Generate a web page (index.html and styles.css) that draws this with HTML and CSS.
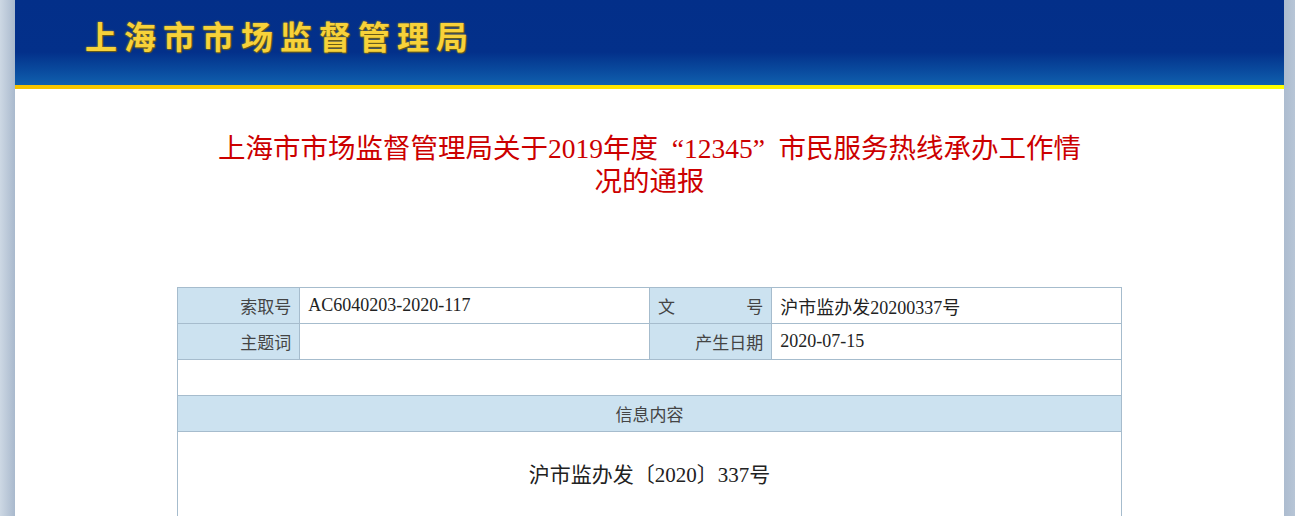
FILE: index.html
```html
<!DOCTYPE html>
<html lang="zh-CN">
<head>
<meta charset="utf-8">
<title>上海市市场监督管理局</title>
<link rel="stylesheet" href="styles.css">
</head>
<body>
<div class="page">
  <header class="banner">
    <div class="brand">上海市市场监督管理局</div>
  </header>
  <div class="stripe"></div>
  <main class="main">
    <h1 class="title">上海市市场监督管理局关于2019年度<span class="q open">“</span>12345<span class="q close">”</span>市民服务热线承办工作情况的通报</h1>
    <table class="meta">
      <colgroup>
        <col class="c-label"><col class="c-value"><col class="c-label"><col class="c-value">
      </colgroup>
      <tr>
        <th class="label">索取号</th>
        <td class="value">AC6040203-2020-117</td>
        <th class="label split"><span>文</span><span>号</span></th>
        <td class="value">沪市监办发20200337号</td>
      </tr>
      <tr>
        <th class="label">主题词</th>
        <td class="value"></td>
        <th class="label">产生日期</th>
        <td class="value">2020-07-15</td>
      </tr>
      <tr class="blank"><td colspan="4"></td></tr>
      <tr><th class="section" colspan="4">信息内容</th></tr>
      <tr>
        <td class="content" colspan="4"><p class="docno">沪市监办发〔2020〕337号</p></td>
      </tr>
    </table>
  </main>
</div>
</body>
</html>
```

FILE: styles.css
```css
html, body {
  margin: 0;
  padding: 0;
}
body {
  background: linear-gradient(to right, #cdd8e4 0px, #a9b9cd 15px, #a9b9cd 1280px, #b7c5d6 1295px);
  font-family: "Liberation Serif", "Noto Sans CJK SC", serif;
  height: 516px;
  overflow: hidden;
}
.page {
  margin-left: 15px;
  width: 1269px;
  background: #ffffff;
  min-height: 516px;
}
.banner {
  height: 85px;
  background: linear-gradient(to bottom, #032f89 0px, #03308a 52px, #0a4da0 72px, #1060ae 85px);
  display: flex;
  align-items: flex-start;
}
.brand {
  margin: 13px 0 0 70px;
  font-family: "Noto Sans CJK SC", sans-serif;
  font-weight: 700;
  font-size: 32px;
  line-height: 44px;
  letter-spacing: 7px;
  color: #f7d23a;
  text-shadow: 1px 1px 1px #6a5a10, 0 0 2px #c9a820;
}
.stripe {
  height: 4px;
  background: linear-gradient(to right, #f6c300, #ffe600 50%, #ffff00);
}
.main {
  padding: 43px 0 0;
}
.title {
  margin: 0 auto;
  width: 880px;
  text-align: center;
  color: #cc0000;
  font-weight: normal;
  font-size: 27.5px;
  line-height: 33px;
}
.q.open { margin-left: 0.5em; }
.q.close { margin-right: 0.5em; }
.meta {
  margin: 89px 0 0 162px;
  width: 945px;
  border-collapse: collapse;
  border: 1px solid #a6bccd;
  font-size: 18px;
  color: #333;
}
.c-label { width: 122px; }
.c-value { width: 349px; }
.meta th, .meta td {
  border: 1px solid #a6bccd;
  height: 35px;
  padding: 0 8px;
  font-weight: normal;
}
.label {
  background: #cce2f0;
  text-align: right;
  font-size: 17px;
  color: #444;
}
.split span:first-child {
  float: left;
}
.value {
  text-align: left;
  color: #222;
}
.section {
  background: #cce2f0;
  text-align: center;
  font-size: 17px;
  color: #444;
}
.meta .content {
  height: 110px;
  vertical-align: top;
}
.docno {
  margin: 26px 0 0;
  text-align: center;
  font-size: 21px;
  color: #222;
}
```
